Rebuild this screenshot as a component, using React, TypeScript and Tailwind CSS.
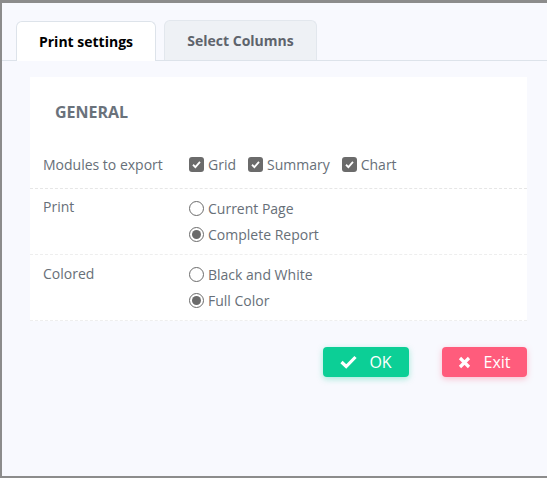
import React from "react";

const Check = () => (
  <span className="w-[15px] h-[15px] rounded-[3px] bg-[#6b6b6b] flex items-center justify-center">
    <svg width="11" height="11" viewBox="0 0 12 12">
      <path d="M2.2 6.3 L4.8 8.8 L9.8 3.2" fill="none" stroke="#fff" strokeWidth="2" />
    </svg>
  </span>
);

const Radio = ({ on }: { on?: boolean }) => (
  <span className="w-[15px] h-[15px] rounded-full border border-[#6b6b6b] bg-white flex items-center justify-center">
    {on && <span className="w-[9px] h-[9px] rounded-full bg-[#6b6b6b]" />}
  </span>
);

const App = () => {
  return (
    <div
      className="w-[547px] h-[478px] bg-[#8c8c8c] pt-[3px] pl-[2px] pb-[2px]"
      style={{ fontFamily: "'Open Sans', 'Noto Sans', sans-serif" }}
    >
      <div className="w-full h-full bg-[#f8f9fe] flex flex-col">
        <div className="flex items-end gap-[8px] pl-[14px] pt-[17px] border-b border-[#dde3ea]">
          <div className="w-[140px] h-[40px] -mb-px bg-white border border-b-0 border-[#dde3ea] rounded-t-[6px] flex items-center justify-center text-[14px] font-bold text-black">
            Print settings
          </div>
          <div className="w-[153px] h-[40px] bg-[#eef1f5] border border-b-0 border-[#e2e7ed] rounded-t-[6px] flex items-center justify-center text-[14px] font-bold text-[#5e646c]">
            Select Columns
          </div>
        </div>
        <div className="pl-[28px] pr-[20px] pt-[16px]">
          <div className="bg-white text-[14px] text-[#676f78]">
            <div className="pl-[25px] pt-[24px] pb-[18px] leading-[22px] text-[16px] font-bold text-[#6a727b]">GENERAL</div>
            <div className="flex items-center h-[48px] border-b border-dashed border-[#e6e6e6] pl-[13px]">
              <div className="w-[146px]">Modules to export</div>
              <div className="flex items-center gap-[12px]">
                <label className="flex items-center gap-[4px]"><Check />Grid</label>
                <label className="flex items-center gap-[4px]"><Check />Summary</label>
                <label className="flex items-center gap-[4px]"><Check />Chart</label>
              </div>
            </div>
            <div className="flex pl-[13px] pt-[9px] pb-[10px] border-b border-dashed border-[#eeeeee]">
              <div className="w-[146px] leading-[20px] -mt-px">Print</div>
              <div className="flex flex-col gap-[6px]">
                <label className="flex items-center gap-[4px] h-[20px]"><Radio />Current Page</label>
                <label className="flex items-center gap-[4px] h-[20px]"><Radio on />Complete Report</label>
              </div>
            </div>
            <div className="flex pl-[13px] pt-[9px] pb-[10px] border-b border-dashed border-[#eeeeee]">
              <div className="w-[146px] leading-[20px]">Colored</div>
              <div className="flex flex-col gap-[6px]">
                <label className="flex items-center gap-[4px] h-[20px]"><Radio />Black and White</label>
                <label className="flex items-center gap-[4px] h-[20px]"><Radio on />Full Color</label>
              </div>
            </div>
          </div>
          <div className="flex justify-end gap-[33px] pt-[26px]">
            <button className="w-[86px] h-[30px] rounded-[4px] bg-[#0ccf96] text-white text-[16px] flex items-center justify-center gap-[12px] shadow-[0_2px_6px_rgba(12,207,150,0.35)]">
              <svg width="17" height="14" viewBox="0 0 17 14">
                <path d="M1.5 7 L6.2 11.5 L15.5 2" fill="none" stroke="#fff" strokeWidth="3.2" />
              </svg>
              OK
            </button>
            <button className="w-[85px] h-[30px] rounded-[4px] bg-[#ff5c7c] text-white text-[16px] flex items-center justify-center gap-[12px] shadow-[0_2px_6px_rgba(255,92,124,0.35)]">
              <svg width="13" height="13" viewBox="0 0 13 13">
                <path d="M2 2 L11 11 M11 2 L2 11" fill="none" stroke="#fff" strokeWidth="3.2" />
              </svg>
              Exit
            </button>
          </div>
        </div>
      </div>
    </div>
  );
};

export default App;
